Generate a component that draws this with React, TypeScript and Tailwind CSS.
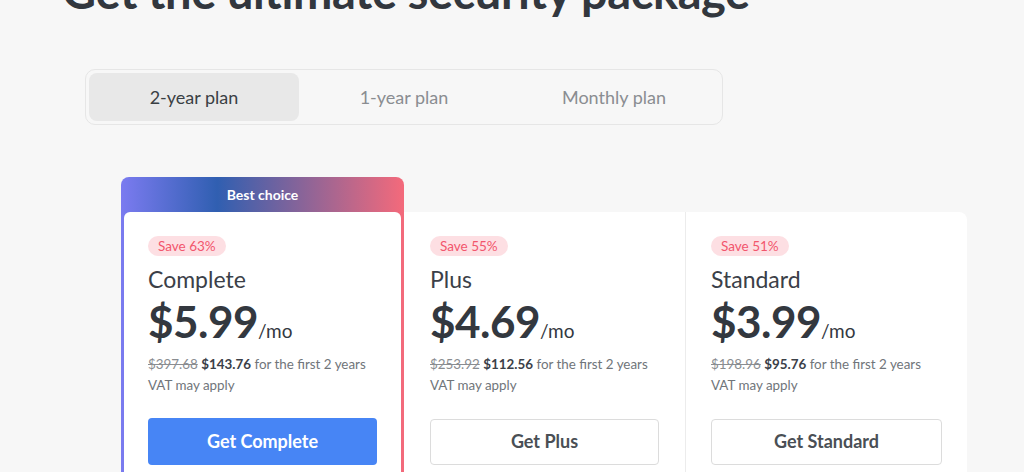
const FONT = "font-['Lato','Liberation_Sans',sans-serif]";

type Plan = {
  save: string;
  name: string;
  price: string;
  was: string;
  now: string;
  cta: string;
  best?: boolean;
};

const PLANS: Plan[] = [
  { save: 'Save 63%', name: 'Complete', price: '$5.99', was: '$397.68', now: '$143.76', cta: 'Get Complete', best: true },
  { save: 'Save 55%', name: 'Plus', price: '$4.69', was: '$253.92', now: '$112.56', cta: 'Get Plus' },
  { save: 'Save 51%', name: 'Standard', price: '$3.99', was: '$198.96', now: '$95.76', cta: 'Get Standard' },
];

const TABS = ['2-year plan', '1-year plan', 'Monthly plan'];

// 卡片内容
const PlanBody = ({ plan }: { plan: Plan }) => (
  <div className="flex flex-col">
    <span className="self-start h-[20px] px-[10px] rounded-full bg-[#fddfe3] text-[#f2566c] text-[13.5px] leading-[20px]">
      {plan.save}
    </span>
    <div className="mt-[9px] text-[23px] leading-[28px] text-[#3b4048]">{plan.name}</div>
    <div className="mt-[4px] flex items-baseline text-[#33383f]">
      <span className="text-[44px] leading-[48px] font-bold tracking-[-0.5px]">{plan.price}</span>
      <span className="text-[19px]">/mo</span>
    </div>
    <div className="mt-[8px] text-[13.4px] leading-[21px] text-[#70757a]">
      <span className="line-through text-[#8a8d91]">{plan.was}</span>{' '}
      <span className="font-bold text-[#3b4048]">{plan.now}</span> for the first 2 years
    </div>
    <div className="text-[13.4px] leading-[21px] text-[#70757a]">VAT may apply</div>
    {plan.best ? (
      <button className="mt-[22px] h-[47px] w-full rounded-[4px] bg-[#4785f5] text-white text-[18px] font-bold">
        {plan.cta}
      </button>
    ) : (
      <button className="mt-[23px] h-[46px] w-full rounded-[4px] border border-[#dcdcdc] bg-white text-[#4a4f55] text-[18px] font-bold">
        {plan.cta}
      </button>
    )}
  </div>
);

export default function App() {
  return (
    <div className={`${FONT} h-[472px] w-[1024px] overflow-hidden bg-[#f7f7f7]`}>
      <h1 className="-mt-[37px] ml-[62px] text-[47px] leading-[56px] font-bold text-[#32373e] tracking-[-0.4px]">
        Get the ultimate security package
      </h1>

      <div className="mt-[50px] ml-[85px] w-[638px] flex rounded-[10px] border border-[#e6e6e6] p-[3px]">
        {TABS.map((t, i) => (
          <div
            key={t}
            className={
              i === 0
                ? 'flex-1 h-[48px] flex items-center justify-center rounded-[8px] bg-[#e8e8e8] text-[18px] text-[#3a3f44]'
                : 'flex-1 h-[48px] flex items-center justify-center text-[18px] text-[#8a8d91]'
            }
          >
            {t}
          </div>
        ))}
      </div>

      <div className="mt-[52px] ml-[121px] flex items-start">
        {PLANS.map((p, i) =>
          p.best ? (
            <div
              key={p.name}
              className="w-[283px] h-[320px] flex flex-col rounded-t-[8px] px-[3px] bg-[linear-gradient(90deg,#7b7bf0_0%,#305fb1_34%,#f46a7b_100%)]"
            >
              <div className="h-[35px] flex items-center justify-center text-white text-[14px] font-bold">
                Best choice
              </div>
              <div className="flex-1 rounded-t-[6px] bg-white pl-[24px] pr-[24px] pt-[24px]">
                <PlanBody plan={p} />
              </div>
            </div>
          ) : (
            <div
              key={p.name}
              className={
                i === PLANS.length - 1
                  ? 'mt-[35px] w-[281px] h-[285px] bg-white rounded-tr-[8px] px-[25px] pt-[24px]'
                  : 'mt-[35px] w-[282px] h-[285px] bg-white border-r border-[#ececec] px-[26px] pt-[24px]'
              }
            >
              <PlanBody plan={p} />
            </div>
          ),
        )}
      </div>
    </div>
  );
}
